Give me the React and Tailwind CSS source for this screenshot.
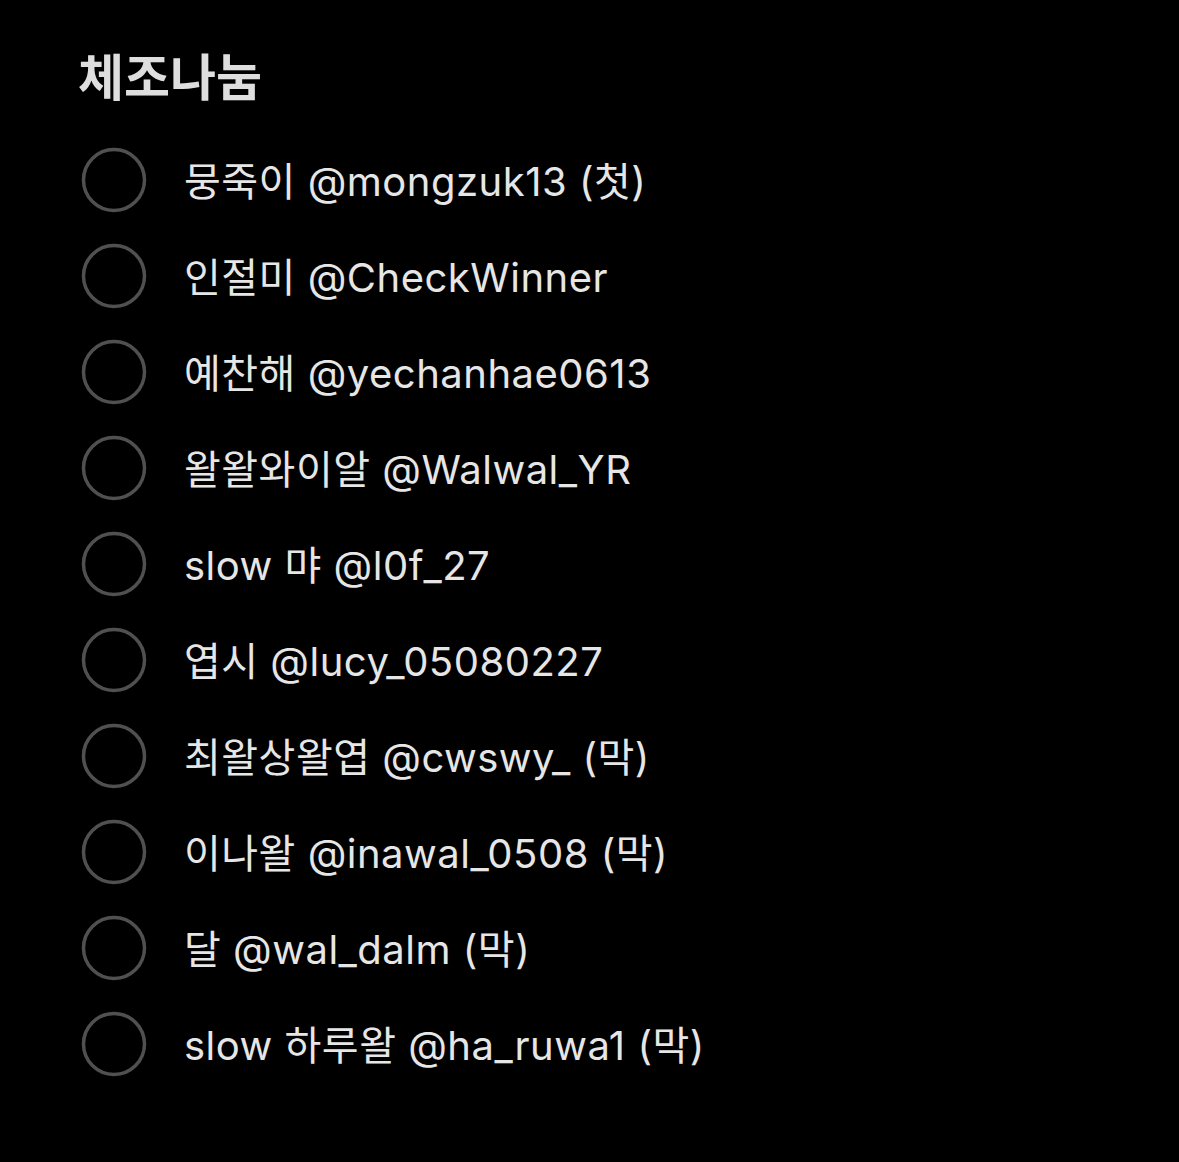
import React from 'react';

const items = [
  '뭉죽이 @mongzuk13 (첫)',
  '인절미 @CheckWinner',
  '예찬해 @yechanhae0613',
  '왈왈와이알 @Walwal_YR',
  'slow 먀 @l0f_27',
  '엽시 @lucy_05080227',
  '최왈상왈엽 @cwswy_ (막)',
  '이나왈 @inawal_0508 (막)',
  '달 @wal_dalm (막)',
  'slow 하루왈 @ha_ruwa1 (막)',
];

const font = { fontFamily: 'Inter, "Noto Sans CJK KR", sans-serif' };

const CheckCircle = () => (
  <svg width="66" height="66" viewBox="0 0 66 66" className="shrink-0">
    <circle cx="33" cy="33" r="30.5" fill="none" stroke="#505053" strokeWidth="3.5" />
  </svg>
);

export default function App() {
  return (
    <div className="w-[1179px] h-[1162px] bg-black pt-[49px] pl-[78px]" style={font}>
      <h1 className="text-[50px] leading-[58px] font-bold text-[#dedede] mb-[25px]">체조나눔</h1>
      <ul>
        {items.map((item) => (
          <li key={item} className="h-[96px] flex items-center pl-[3px]">
            <CheckCircle />
            <span className="ml-[37px] pt-[3px] text-[40px] text-[#e6e6e6] tracking-[0.5px]">{item}</span>
          </li>
        ))}
      </ul>
    </div>
  );
}
